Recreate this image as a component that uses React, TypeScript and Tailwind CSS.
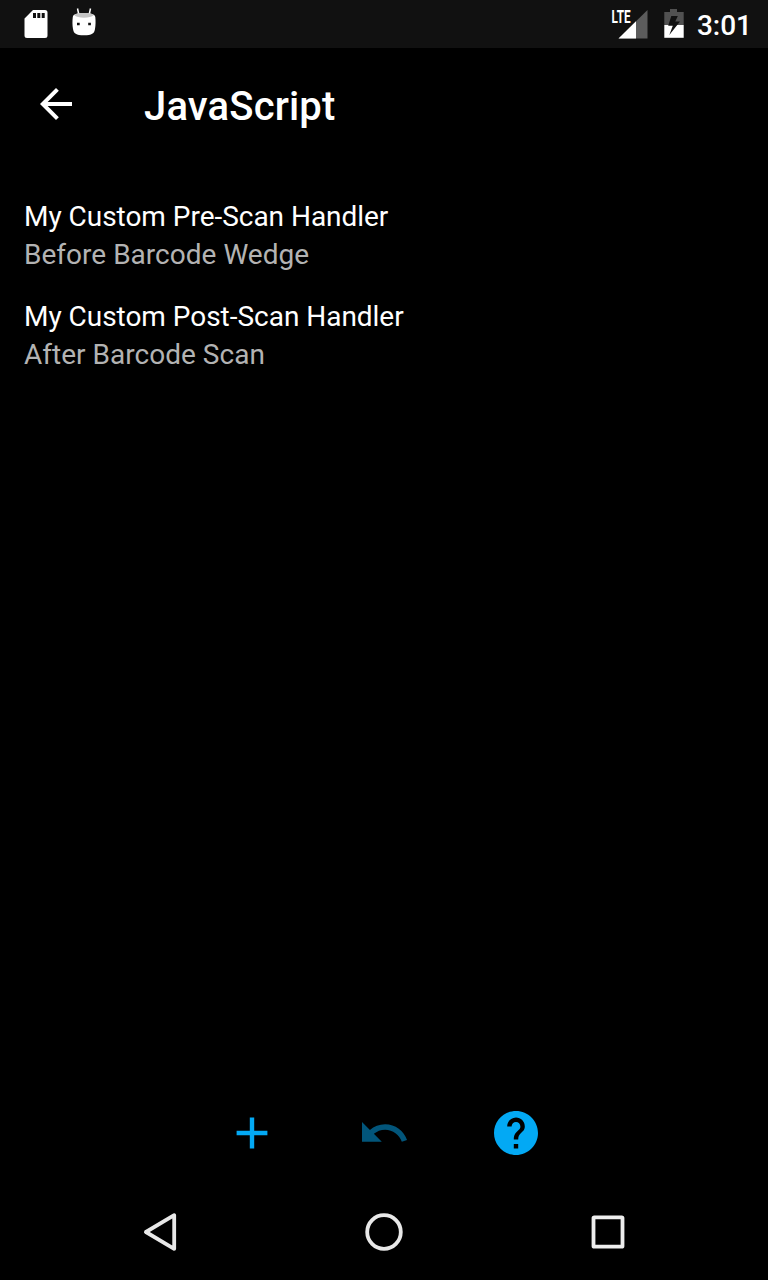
const handlers = [
  { name: 'My Custom Pre-Scan Handler', event: 'Before Barcode Wedge' },
  { name: 'My Custom Post-Scan Handler', event: 'After Barcode Scan' },
];

function StatusBar() {
  return (
    <div className="flex h-12 shrink-0 justify-between bg-[#111111] pr-4 pl-3">
      <div className="flex">
        <svg className="size-12" viewBox="0 0 48 48" fill="#fff">
          <path
            fillRule="evenodd"
            d="M21 10h12a2.5 2.5 0 0 1 2.5 2.5v23a2.5 2.5 0 0 1-2.5 2.5H15a2.5 2.5 0 0 1-2.5-2.5V18.500zM21 13v5h3v-5zM25.300 13v5h3v-5zM29.700 13v5h3v-5z"
          />
        </svg>
        <svg className="size-12" viewBox="0 0 48 48">
          <path d="M17.500 8.500l1.200 5.500M30.500 8.500l-1.200 5.500" stroke="#fff" strokeWidth="1.5" fill="none" />
          <path d="M12.800 17C13 14 18 13 24 13s11 1 11.300 4c.400 4 .400 8-.300 12-.700 4.500-3 6.300-11 6.300s-10.300-1.800-11-6.300c-.700-4-.700-8-.200-12z" fill="#fff" />
          <path d="M14.300 15.300C15 13.500 19 13 24 13s9 .5 9.700 2.300C32 17 28.500 17.700 24 17.700S16 17 14.300 15.300z" fill="#c4c4c4" />
          <path d="M17 22.700h2.700v2.600H17zM28.200 22.700h2.700v2.600h-2.700z" fill="#111" />
        </svg>
      </div>
      <div className="flex">
        <svg className="h-12 w-[42px]" viewBox="0 0 42 48">
          <path d="M36.500 10v28.500H7.500z" fill="#5c5c5c" />
          <path d="M25 21.300v17.200H7.500z" fill="#fff" />
          <text x="0.6" y="22.700" fill="#fff" fontSize="17.5" fontWeight="700" textLength="19" lengthAdjust="spacingAndGlyphs">
            LTE
          </text>
        </svg>
        <svg className="h-12 w-[44px]" viewBox="0 0 44 48">
          <path d="M17 9h7v3h6.700v13H11.300V12H17z" fill="#515151" />
          <path d="M11.300 25h19.400v12.800H11.300z" fill="#fff" />
          <path d="M18.300 16h6.500l-2.500 5.500H27L16.300 35l3.500-9.300h-4.600z" fill="#111" />
        </svg>
        <span className="pt-0.5 text-[28px] leading-[48px] font-medium">3:01</span>
      </div>
    </div>
  );
}

export default function App() {
  return (
    <div
      className="flex h-[1280px] w-[768px] flex-col bg-black text-white"
      style={{ fontFamily: 'Roboto, sans-serif' }}
    >
      <StatusBar />
      <header className="flex h-28 shrink-0 items-center pl-8">
        <button aria-label="Back" className="size-12">
          <svg className="size-12" viewBox="0 0 24 24" fill="#fff">
            <path d="M20 11H7.830l5.590-5.590L12 4l-8 8 8 8 1.410-1.410L7.830 13H20v-2z" />
          </svg>
        </button>
        <h1 className="ml-16 pt-1.5 text-[40px] leading-[48px] font-medium tracking-[0.16px]">JavaScript</h1>
      </header>
      <ul className="flex flex-1 flex-col gap-6 px-6 pt-[38px] text-[28px] leading-[38px]">
        {handlers.map((h) => (
          <li key={h.name}>
            <p className="tracking-[-0.03px]">{h.name}</p>
            <p className="tracking-[0.02px] text-[#b3b3b3]">{h.event}</p>
          </li>
        ))}
      </ul>
      <div className="flex h-[102px] shrink-0 items-center justify-center">
        <button aria-label="Add" className="flex w-[132px] justify-center">
          <svg className="size-[52px]" viewBox="0.18 0.18 23.64 23.64" fill="#03a9f4">
            <path d="M19 13h-6v6h-2v-6H5v-2h6V5h2v6h6v2z" />
          </svg>
        </button>
        <button aria-label="Undo" className="flex w-[132px] justify-center">
          <svg className="size-[52px]" viewBox="0.18 0.18 23.64 23.64" fill="#02557a">
            <path d="M12.500 8c-2.650 0-5.050.990-6.900 2.600L2 7v9h9l-3.620-3.620c1.390-1.160 3.160-1.880 5.120-1.880 3.540 0 6.550 2.310 7.600 5.500l2.370-.780C21.080 11.030 17.150 8 12.500 8z" />
          </svg>
        </button>
        <button aria-label="Help" className="flex w-[132px] justify-center">
          <svg className="size-[52px]" viewBox="0.18 0.18 23.64 23.64" fill="#03a9f4">
            <path d="M12 2C6.480 2 2 6.480 2 12s4.480 10 10 10 10-4.480 10-10S17.520 2 12 2zm1 17h-2v-2h2v2zm2.070-7.750l-.900.920C13.450 12.900 13 13.500 13 15h-2v-.500c0-1.100.450-2.100 1.170-2.830l1.240-1.260c.370-.360.590-.860.590-1.410 0-1.100-.900-2-2-2s-2 .900-2 2H8c0-2.210 1.790-4 4-4s4 1.790 4 4c0 .880-.360 1.680-.930 2.250z" />
          </svg>
        </button>
      </div>
      <nav className="flex h-24 shrink-0 items-center justify-center">
        <div className="flex w-56 justify-center">
          <svg className="size-12" viewBox="0 0 48 48" fill="none" stroke="#e8e8e8" strokeWidth="3.8" strokeLinejoin="round">
            <path d="M38.200 7.200v33.600L9.900 24z" />
          </svg>
        </div>
        <div className="flex w-56 justify-center">
          <svg className="size-12" viewBox="0 0 48 48" fill="none" stroke="#e8e8e8" strokeWidth="3.8">
            <circle cx="24" cy="24" r="16.800" />
          </svg>
        </div>
        <div className="flex w-56 justify-center">
          <svg className="size-12" viewBox="0 0 48 48" fill="none" stroke="#eeeeee" strokeWidth="3.800" strokeLinejoin="round">
            <rect x="9.500" y="9.300" width="29" height="29.400" rx=".8" />
          </svg>
        </div>
      </nav>
    </div>
  );
}
